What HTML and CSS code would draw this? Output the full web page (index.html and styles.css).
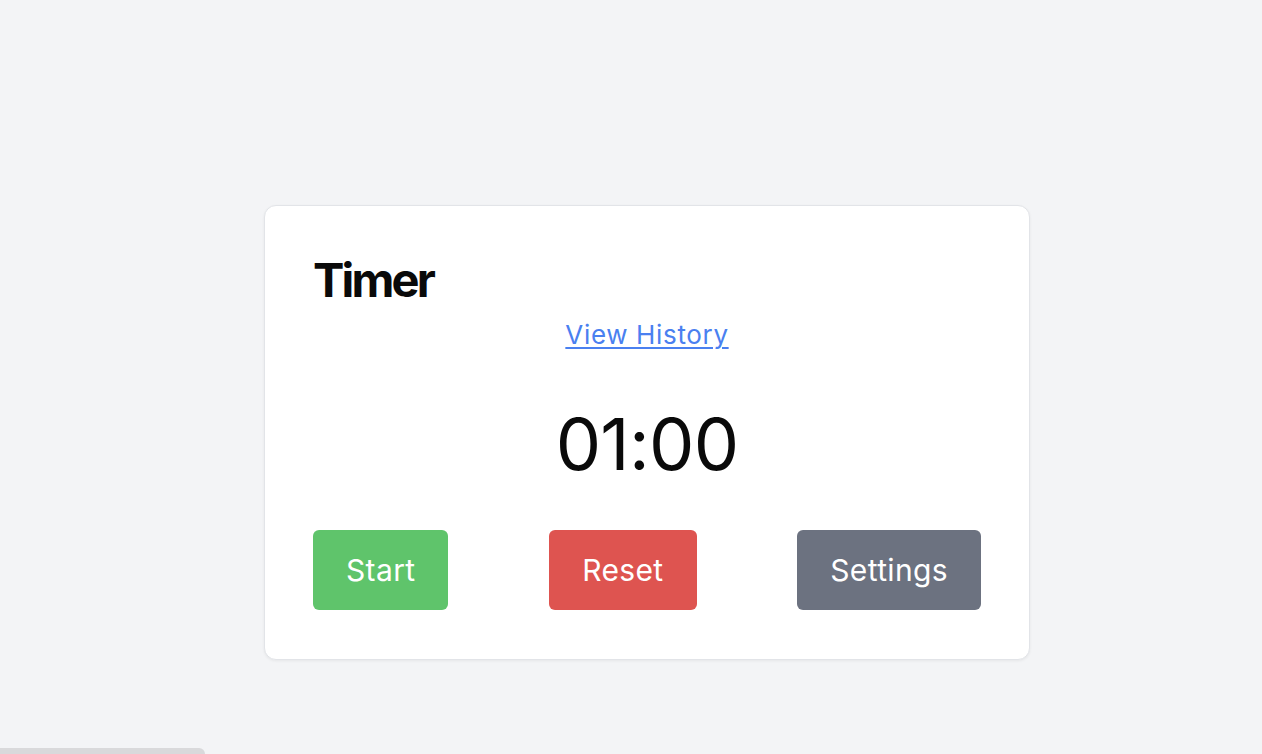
FILE: index.html
```html
<!DOCTYPE html>
<html lang="en">
<head>
<meta charset="utf-8">
<title>Timer</title>
<link rel="stylesheet" href="styles.css">
</head>
<body>
<main class="page">
  <section class="card">
    <h1 class="title">Timer</h1>
    <div class="history-row"><a class="history-link" href="#">View History</a></div>
    <div class="time">01:00</div>
    <div class="actions">
      <button class="btn btn-start">Start</button>
      <button class="btn btn-reset">Reset</button>
      <button class="btn btn-settings">Settings</button>
    </div>
  </section>
</main>
<div class="scroll-thumb"></div>
</body>
</html>
```

FILE: styles.css
```css
html, body {
  margin: 0;
  padding: 0;
  height: 100%;
  overflow: hidden;
}
body {
  background: #f3f4f6;
  font-family: Inter, "Noto Sans", "Liberation Sans", sans-serif;
  color: #0a0a0a;
}
.page {
  padding: 205px 0 0 264px;
}
.card {
  width: 766px;
  box-sizing: border-box;
  background: #ffffff;
  border: 1px solid #e2e4e8;
  border-radius: 12px;
  box-shadow: 0 1px 3px rgba(0, 0, 0, 0.06);
  padding: 50px 48px 49px;
}
.title {
  margin: 0;
  font-size: 47px;
  line-height: 48px;
  font-weight: 650;
  letter-spacing: -0.06em;
}
.history-row {
  display: flex;
  justify-content: center;
  margin-top: 15px;
}
.history-link {
  font-size: 26px;
  line-height: 32px;
  letter-spacing: 0.025em;
  color: #4a80f0;
  text-decoration: underline;
  text-underline-offset: 3px;
  text-decoration-thickness: 2px;
}
.time {
  margin-top: 57px;
  text-align: center;
  font-size: 72px;
  line-height: 72px;
  font-weight: 400;
  letter-spacing: -0.01em;
}
.actions {
  margin-top: 50px;
  display: flex;
  justify-content: space-between;
}
.btn {
  height: 80px;
  padding: 0 33px;
  border: none;
  border-radius: 6px;
  color: #ffffff;
  font-family: Inter, "Noto Sans", "Liberation Sans", sans-serif;
  font-size: 30px;
  line-height: 36px;
  letter-spacing: 0.012em;
  cursor: pointer;
}
.btn-start { background: #5fc46b; }
.btn-reset { background: #de5450; }
.btn-settings { background: #6c7280; }
.scroll-thumb {
  position: fixed;
  left: 0;
  bottom: 0;
  width: 205px;
  height: 6px;
  background: #d9d9db;
  border-top-right-radius: 6px;
}
```
